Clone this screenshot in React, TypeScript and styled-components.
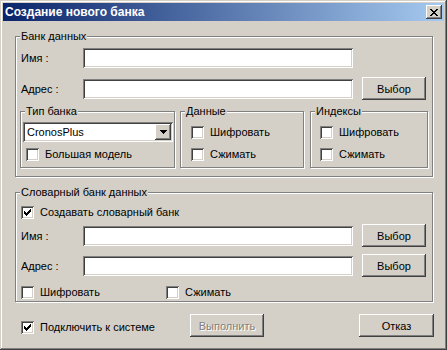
import React from 'react';
import styled, { createGlobalStyle } from 'styled-components';

const GlobalStyle = createGlobalStyle`
  body {
    margin: 0;
    background: #d4d0c8;
  }
`;

const Window = styled.div`
  width: 447px;
  height: 350px;
  box-sizing: border-box;
  background: #d4d0c8;
  display: flex;
  flex-direction: column;
  font-family: 'Liberation Sans', Arial, sans-serif;
  font-size: 11px;
  color: #000;
  box-shadow: inset -1px -1px #404040, inset 1px 1px #d4d0c8, inset -2px -2px #808080, inset 2px 2px #fff;
`;

const TitleBar = styled.div`
  margin: 3px 3px 0;
  height: 18px;
  display: flex;
  align-items: center;
  justify-content: space-between;
  padding: 0 2px 0 2px;
  background: linear-gradient(to right, #0a246a, #a6caf0);
`;

const Title = styled.span`
  color: #fff;
  font-weight: bold;
  font-size: 12px;
  line-height: 14px;
`;

const raised = `
  background: #d4d0c8;
  box-shadow: inset -1px -1px #404040, inset 1px 1px #fff, inset -2px -2px #808080, inset 2px 2px #d4d0c8;
`;

const sunken = `
  box-shadow: inset 1px 1px #808080, inset -1px -1px #fff, inset 2px 2px #404040, inset -2px -2px #d4d0c8;
`;

const CloseButton = styled.div`
  width: 16px;
  height: 14px;
  display: flex;
  align-items: center;
  justify-content: center;
  ${raised}
`;

const Body = styled.div`
  padding: 15px 0 0 15px;
  display: flex;
  flex-direction: column;
`;

const Group = styled.div<{ $w: number; $h: number; $pl?: number }>`
  position: relative;
  box-sizing: border-box;
  width: ${(p) => p.$w}px;
  height: ${(p) => p.$h}px;
  border: 1px solid #808080;
  box-shadow: 1px 1px 0 #fff, inset 1px 1px 0 #fff;
  padding-left: ${(p) => p.$pl ?? 4}px;
  display: flex;
  flex-direction: column;
  align-items: flex-start;
`;

const Legend = styled.span`
  position: absolute;
  top: -7px;
  left: 4px;
  padding: 0 1px;
  line-height: 13px;
  background: #d4d0c8;
  white-space: nowrap;
`;

const FieldRow = styled.div<{ $mt: number }>`
  display: flex;
  align-items: center;
  height: 20px;
  margin-top: ${(p) => p.$mt}px;
`;

const FieldLabel = styled.span`
  width: 62px;
  padding-left: 1px;
  line-height: 13px;
`;

const TextInput = styled.input`
  width: 270px;
  height: 20px;
  box-sizing: border-box;
  border: 0;
  outline: none;
  margin: 0;
  padding: 0 4px;
  background: #fff;
  font: inherit;
  ${sunken}
`;

const Button = styled.div<{ $w: number; $disabled?: boolean; $ml?: number }>`
  width: ${(p) => p.$w}px;
  height: 23px;
  box-sizing: border-box;
  display: flex;
  align-items: center;
  justify-content: center;
  margin-left: ${(p) => p.$ml ?? 0}px;
  color: ${(p) => (p.$disabled ? '#808080' : '#000')};
  text-shadow: ${(p) => (p.$disabled ? '1px 1px 0 #fff' : 'none')};
  ${raised}
`;

const SideButton = styled(Button)`
  margin: -2px 0 -1px 9px;
`;

const SubRow = styled.div`
  display: flex;
  margin-top: 12px;
`;

const CheckRow = styled.div<{ $mt?: number; $ml?: number; $w?: number }>`
  display: flex;
  align-items: center;
  gap: 6px;
  margin-top: ${(p) => p.$mt ?? 0}px;
  margin-left: ${(p) => p.$ml ?? 0}px;
  width: ${(p) => (p.$w ? `${p.$w}px` : 'auto')};
  line-height: 13px;
  white-space: nowrap;
`;

const Box = styled.span`
  width: 13px;
  height: 13px;
  box-sizing: border-box;
  background: #fff;
  display: flex;
  align-items: center;
  justify-content: center;
  flex-shrink: 0;
  ${sunken}
`;

const Combo = styled.div`
  margin: 10px 0 0 2px;
  width: 150px;
  height: 20px;
  box-sizing: border-box;
  padding: 2px;
  background: #fff;
  display: flex;
  align-items: center;
  ${sunken}
`;

const ComboText = styled.span`
  flex: 1;
  padding-left: 2px;
  line-height: 13px;
`;

const ComboArrow = styled.div`
  width: 16px;
  height: 16px;
  box-sizing: border-box;
  display: flex;
  align-items: center;
  justify-content: center;
  ${raised}
`;

const Footer = styled.div`
  display: flex;
  align-items: flex-start;
  margin-top: 12px;
`;

const Check = ({ checked }: { checked?: boolean }) => (
  <Box>
    {checked && (
      <svg width="7" height="7" viewBox="0 0 7 7" shapeRendering="crispEdges">
        <path d="M0 2h1v3H0zM1 3h1v3H1zM2 4h1v3H2zM3 3h1v3H3zM4 2h1v3H4zM5 1h1v3H5zM6 0h1v3H6z" fill="#000" />
      </svg>
    )}
  </Box>
);

const CheckItem = ({
  label,
  checked,
  mt,
  ml,
  w,
}: {
  label: string;
  checked?: boolean;
  mt?: number;
  ml?: number;
  w?: number;
}) => (
  <CheckRow $mt={mt} $ml={ml} $w={w}>
    <Check checked={checked} />
    <span>{label}</span>
  </CheckRow>
);

export default function App() {
  return (
    <>
      <GlobalStyle />
      <Window>
        <TitleBar>
          <Title>Создание нового банка</Title>
          <CloseButton>
            <svg width="8" height="7" viewBox="0 0 8 7" shapeRendering="crispEdges">
              <path
                d="M0 0h2v1H0zM6 0h2v1H6zM1 1h2v1H1zM5 1h2v1H5zM2 2h4v1H2zM3 3h2v1H3zM2 4h4v1H2zM1 5h2v1H1zM5 5h2v1H5zM0 6h2v1H0zM6 6h2v1H6z"
                fill="#000"
              />
            </svg>
          </CloseButton>
        </TitleBar>
        <Body>
          <Group $w={418} $h={141}>
            <Legend>Банк данных</Legend>
            <FieldRow $mt={11}>
              <FieldLabel>Имя :</FieldLabel>
              <TextInput defaultValue="" />
            </FieldRow>
            <FieldRow $mt={11}>
              <FieldLabel>Адрес :</FieldLabel>
              <TextInput defaultValue="" />
              <SideButton $w={64}>Выбор</SideButton>
            </FieldRow>
            <SubRow>
              <Group $w={155} $h={57} $pl={0}>
                <Legend>Тип банка</Legend>
                <Combo>
                  <ComboText>CronosPlus</ComboText>
                  <ComboArrow>
                    <svg width="7" height="4" viewBox="0 0 7 4" shapeRendering="crispEdges">
                      <path d="M0 0h7v1H0zM1 1h5v1H1zM2 2h3v1H2zM3 3h1v1H3z" fill="#000" />
                    </svg>
                  </ComboArrow>
                </Combo>
                <CheckItem label="Большая модель" mt={6} ml={5} />
              </Group>
              <div style={{ width: 5 }} />
              <Group $w={124} $h={57} $pl={10}>
                <Legend>Данные</Legend>
                <CheckItem label="Шифровать" mt={14} />
                <CheckItem label="Сжимать" mt={9} />
              </Group>
              <div style={{ width: 6 }} />
              <Group $w={118} $h={57} $pl={9}>
                <Legend>Индексы</Legend>
                <CheckItem label="Шифровать" mt={14} />
                <CheckItem label="Сжимать" mt={9} />
              </Group>
            </SubRow>
          </Group>

          <div style={{ height: 15 }} />

          <Group $w={418} $h={110}>
            <Legend>Словарный банк данных</Legend>
            <CheckItem label="Создавать словарный банк" checked mt={13} ml={1} />
            <FieldRow $mt={7}>
              <FieldLabel>Имя :</FieldLabel>
              <TextInput defaultValue="" />
              <SideButton $w={64}>Выбор</SideButton>
            </FieldRow>
            <FieldRow $mt={10}>
              <FieldLabel>Адрес :</FieldLabel>
              <TextInput defaultValue="" />
              <SideButton $w={64}>Выбор</SideButton>
            </FieldRow>
            <FieldRow $mt={8}>
              <CheckItem label="Шифровать" ml={1} w={145} />
              <CheckItem label="Сжимать" />
            </FieldRow>
          </Group>

          <Footer>
            <CheckItem label="Подключить к системе" checked mt={7} ml={6} w={169} />
            <Button $w={74} $disabled>
              Выполнить
            </Button>
            <Button $w={75} $ml={95}>
              Отказ
            </Button>
          </Footer>
        </Body>
      </Window>
    </>
  );
}
